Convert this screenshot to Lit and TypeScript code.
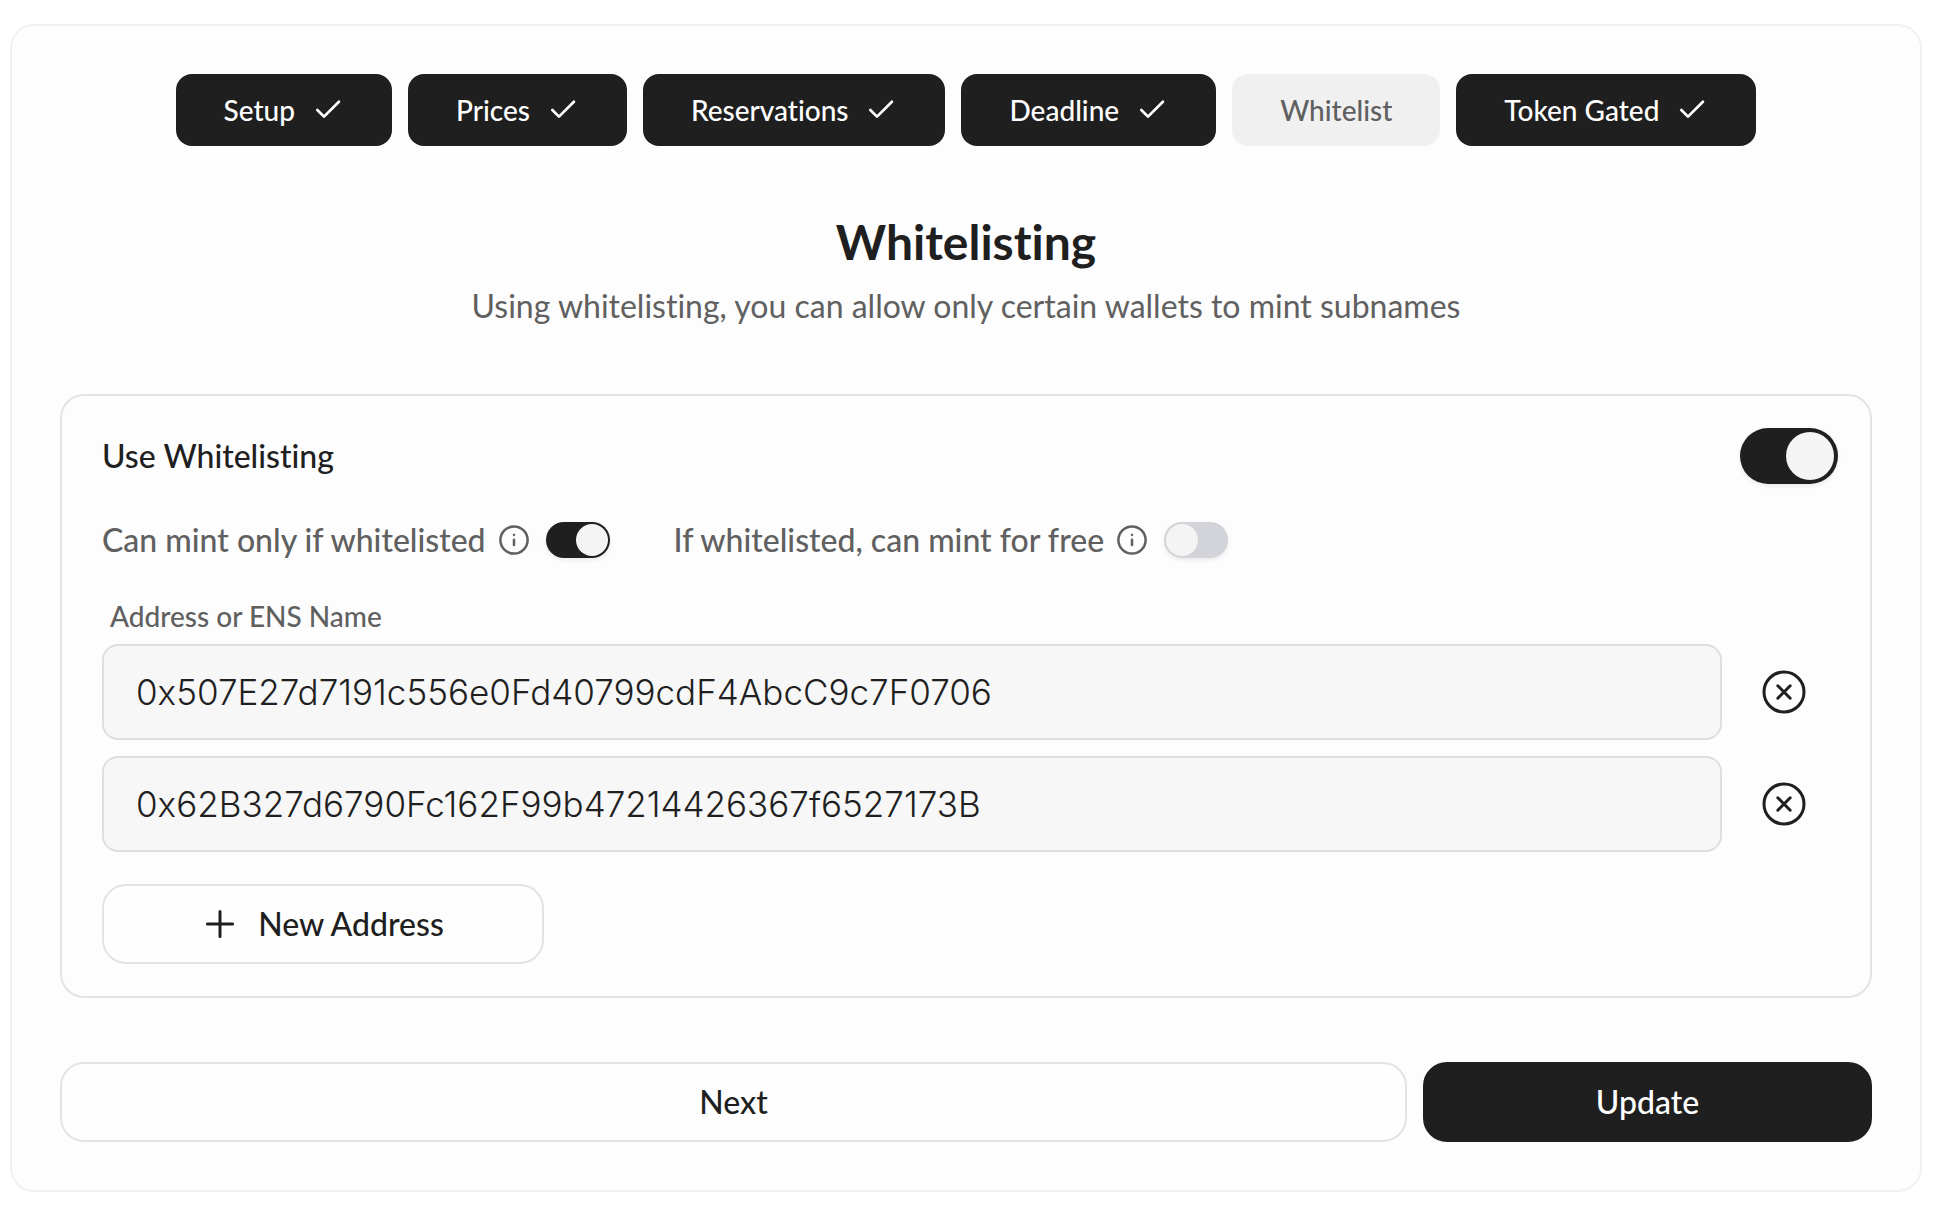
import { LitElement, html, css, svg, nothing } from "lit";
import { customElement, state } from "lit/decorators.js";
import { classMap } from "lit/directives/class-map.js";

interface Step {
  label: string;
  done: boolean;
}

const STEPS: Step[] = [
  { label: "Setup", done: true },
  { label: "Prices", done: true },
  { label: "Reservations", done: true },
  { label: "Deadline", done: true },
  { label: "Whitelist", done: false },
  { label: "Token Gated", done: true },
];

const icon = (name: string, size: number, body: unknown) => html`
  <svg class=${`icon ${name}`} width=${size} height=${size} viewBox="0 0 24 24" aria-hidden="true">${body}</svg>
`;

const checkIcon = icon("check", 32, svg`<path d="M4 12l5 5L20.2 5.8" />`);
const plusIcon = icon("plus", 36, svg`<path d="M3.6 12h16.8M12 3.6v16.8" />`);
const infoIcon = icon(
  "info",
  32,
  svg`<circle cx="12" cy="12" r="10.2" /><path d="M12 11.8v4M12 8.2l.01-.011" />`,
);
const removeIcon = icon(
  "remove",
  48,
  svg`<circle cx="12" cy="12" r="10" /><path d="M8.9 15.1l6.2-6.2M15.1 15.1L8.9 8.9" />`,
);

@customElement("app-root")
export class AppRoot extends LitElement {
  @state() private enabled = true;
  @state() private onlyWhitelisted = true;
  @state() private freeMint = false;
  @state() private addresses = [
    "0x507E27d7191c556e0Fd40799cdF4AbcC9c7F0706",
    "0x62B327d6790Fc162F99b47214426367f6527173B",
  ];

  static styles = css`
    :host {
      --ink: #1f1f1f;
      --muted: #606060;
      --line: #e3e3e3;
      display: block;
      box-sizing: border-box;
      min-height: 100vh;
      padding: 24px 26px 16px 10px;
      background: #fff;
      color: var(--ink);
      font-family: Lato, "Liberation Sans", sans-serif;
      font-size: 32px;
      font-weight: 500;
      line-height: 40px;
      font-variant-ligatures: none;
    }
    *,
    *::before {
      box-sizing: border-box;
    }
    button,
    input {
      margin: 0;
      font: inherit;
      font-variant-ligatures: none;
      color: inherit;
    }
    button {
      cursor: pointer;
    }
    .panel {
      padding: 48px;
      border: 2px solid #f1f1f1;
      border-radius: 24px;
      background: #fdfdfd;
    }
    .steps {
      display: flex;
      flex-wrap: wrap;
      justify-content: center;
      gap: 16px;
    }
    .step {
      display: flex;
      align-items: center;
      gap: 17px;
      height: 72px;
      padding: 0 48px;
      border: 0;
      border-radius: 16px;
      background: var(--ink);
      color: #fff;
      font-size: 28px;
    }
    .step.current {
      background: #f0f0f0;
      color: var(--muted);
    }
    .icon {
      display: block;
      flex: none;
      fill: none;
      stroke: currentColor;
      stroke-width: 1.5;
      stroke-linecap: round;
      stroke-linejoin: round;
    }
    .check {
      stroke-width: 2;
    }
    .plus {
      stroke-width: 2;
    }
    .info {
      stroke-width: 1.9;
    }
    .intro {
      padding: 64px 0 60px;
      text-align: center;
    }
    .title {
      margin: 0 0 12px;
      font-size: 48px;
      line-height: 64px;
      font-weight: 700;
    }
    .lead {
      margin: 0 0 8px;
      color: var(--muted);
      font-weight: 400;
    }
    .card {
      padding: 32px 32px 32px 40px;
      border: 2px solid var(--line);
      border-radius: 24px;
    }
    .row {
      display: flex;
      align-items: center;
      justify-content: space-between;
    }
    .options {
      display: flex;
      flex-wrap: wrap;
      gap: 64px;
      padding: 36px 0;
      color: var(--muted);
    }
    .option {
      display: flex;
      align-items: center;
      gap: 16px;
    }
    .option-name {
      display: flex;
      align-items: center;
      gap: 12px;
    }
    .switch {
      appearance: none;
      flex: none;
      display: flex;
      width: 64px;
      height: 36px;
      padding: 2px;
      border-radius: 32px;
      background: #d3d4d9;
      box-shadow: 0 2px 4px rgba(0, 0, 0, 0.08);
      cursor: pointer;
    }
    .switch::before {
      content: "";
      height: 100%;
      aspect-ratio: 1;
      border-radius: 50%;
      background: #f4f4f4;
    }
    .switch:checked {
      justify-content: flex-end;
      background: var(--ink);
    }
    .switch.large {
      width: 98px;
      height: 56px;
      padding: 4px;
    }
    .list-label {
      padding: 0 8px 8px;
      color: var(--muted);
      font-size: 28px;
    }
    .list {
      display: flex;
      flex-direction: column;
      gap: 16px;
    }
    .entry {
      display: flex;
      align-items: center;
      gap: 38px;
      padding-right: 30px;
    }
    .address {
      flex: 1;
      min-width: 0;
      height: 96px;
      padding: 0 32px;
      border: 2px solid #dfdfdf;
      border-radius: 16px;
      background: #f7f7f7;
      font-family: Inter, "Liberation Sans", sans-serif;
      font-size: 35px;
      font-weight: 300;
    }
    .icon-button {
      padding: 0;
      border: 0;
      background: none;
    }
    .button {
      display: flex;
      align-items: center;
      justify-content: center;
      gap: 20px;
      height: 80px;
      border: 2px solid var(--line);
      border-radius: 24px;
      background: #fefefe;
    }
    .button.primary {
      border-color: var(--ink);
      background: var(--ink);
      color: #fff;
    }
    .add {
      width: calc(25% + 8px);
      min-width: 320px;
      margin-top: 32px;
    }
    .actions {
      display: grid;
      grid-template-columns: 3fr 1fr;
      gap: 16px;
      margin-top: 64px;
    }
  `;

  private setAddress(index: number, value: string) {
    this.addresses = this.addresses.map((a, i) => (i === index ? value : a));
  }

  private removeAddress(index: number) {
    this.addresses = this.addresses.filter((_, i) => i !== index);
  }

  private addAddress() {
    this.addresses = [...this.addresses, ""];
  }

  render() {
    return html`
      <main class="panel">
        <nav class="steps">
          ${STEPS.map(
            (s) => html`
              <button type="button" class=${classMap({ step: true, current: !s.done })}>
                <span>${s.label}</span>${s.done ? checkIcon : nothing}
              </button>
            `,
          )}
        </nav>
        <header class="intro">
          <h1 class="title">Whitelisting</h1>
          <p class="lead">Using whitelisting, you can allow only certain wallets to mint subnames</p>
        </header>
        <section class="card">
          <div class="row">
            <label for="enabled">Use Whitelisting</label>
            <input
              id="enabled"
              class="switch large"
              type="checkbox"
              .checked=${this.enabled}
              @change=${(e: Event) => (this.enabled = (e.target as HTMLInputElement).checked)}
            />
          </div>
          <div class="options">
            <div class="option">
              <label class="option-name" for="only">Can mint only if whitelisted ${infoIcon}</label>
              <input
                id="only"
                class="switch"
                type="checkbox"
                .checked=${this.onlyWhitelisted}
                @change=${(e: Event) => (this.onlyWhitelisted = (e.target as HTMLInputElement).checked)}
              />
            </div>
            <div class="option">
              <label class="option-name" for="free">If whitelisted, can mint for free ${infoIcon}</label>
              <input
                id="free"
                class="switch"
                type="checkbox"
                .checked=${this.freeMint}
                @change=${(e: Event) => (this.freeMint = (e.target as HTMLInputElement).checked)}
              />
            </div>
          </div>
          <div class="list-label" id="list-label">Address or ENS Name</div>
          <div class="list">
            ${this.addresses.map(
              (a, i) => html`
                <div class="entry">
                  <input
                    class="address"
                    type="text"
                    aria-labelledby="list-label"
                    .value=${a}
                    @input=${(e: Event) => this.setAddress(i, (e.target as HTMLInputElement).value)}
                  />
                  <button
                    type="button"
                    class="icon-button"
                    aria-label="Remove address"
                    @click=${() => this.removeAddress(i)}
                  >
                    ${removeIcon}
                  </button>
                </div>
              `,
            )}
          </div>
          <button type="button" class="button add" @click=${this.addAddress}>${plusIcon}<span>New Address</span></button>
        </section>
        <div class="actions">
          <button type="button" class="button">Next</button>
          <button type="button" class="button primary">Update</button>
        </div>
      </main>
    `;
  }
}
